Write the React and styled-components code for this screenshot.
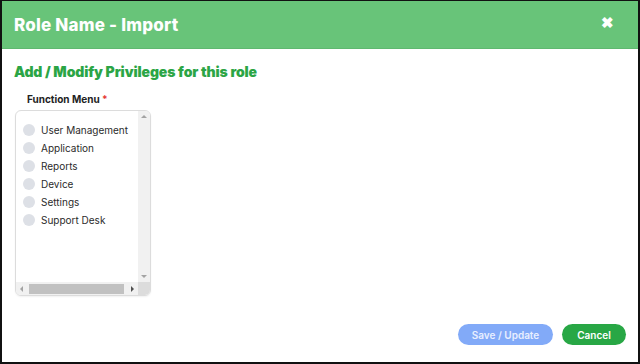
import React from 'react'
import styled, { createGlobalStyle } from 'styled-components'

const GlobalStyle = createGlobalStyle`
  html, body {
    margin: 0;
    padding: 0;
    background: #fff;
  }
  body {
    font-family: Inter, "Open Sans", sans-serif;
  }
`

const Frame = styled.div`
  width: 640px;
  height: 364px;
  box-sizing: border-box;
  border: 2px solid #111;
  border-top-width: 1px;
  display: flex;
  flex-direction: column;
  background: #fff;
`

const Header = styled.div`
  height: 47px;
  flex: none;
  background: #68c479;
  border-bottom: 1px solid #5fb870;
  display: flex;
  align-items: center;
  justify-content: space-between;
  padding: 0 24px 0 12px;
`

const Title = styled.h1`
  margin: 0;
  font-size: 17px;
  font-weight: 800;
  color: #fff;
  letter-spacing: 0.2px;
`

const Close = styled.span`
  color: #fff;
  font-size: 15px;
  font-weight: 900;
  line-height: 1;
  margin-top: -4px;
`

const Body = styled.div`
  flex: 1;
  display: flex;
  flex-direction: column;
  padding: 14px 12px 17px 12px;
`

const Heading = styled.h2`
  margin: 0;
  font-size: 14px;
  font-weight: 900;
  color: #2ba545;
  letter-spacing: -0.1px;
`

const Label = styled.div`
  margin: 13px 0 0 13px;
  font-size: 10px;
  font-weight: 700;
  color: #222;
  span {
    color: #e53935;
  }
`

const ListBox = styled.div`
  margin: 5px 0 0 1px;
  width: 136px;
  height: 186px;
  box-sizing: border-box;
  border: 1px solid #dcdcdc;
  border-radius: 6px;
  display: grid;
  grid-template-columns: 1fr 12px;
  grid-template-rows: 1fr 13px;
  overflow: hidden;
  box-shadow: 0 1px 2px rgba(0, 0, 0, 0.06);
`

const Items = styled.ul`
  list-style: none;
  margin: 0;
  padding: 12px 0 0 7px;
  display: flex;
  flex-direction: column;
  gap: 5px;
`

const Item = styled.li`
  display: flex;
  align-items: center;
  gap: 6px;
  height: 13px;
  font-size: 10px;
  color: #2b2b2b;
  white-space: nowrap;
`

const Radio = styled.span`
  width: 12px;
  height: 12px;
  border-radius: 50%;
  background: #dde0e6;
  flex: none;
`

const VTrack = styled.div`
  background: #f1f1f1;
  display: flex;
  flex-direction: column;
  justify-content: space-between;
  align-items: center;
  padding: 4px 0;
`

const HTrack = styled.div`
  background: #f1f1f1;
  display: flex;
  align-items: center;
  gap: 3px;
  padding: 0 4px;
`

const Corner = styled.div`
  background: #dcdcdc;
`

const Arrow = styled.span`
  width: 0;
  height: 0;
  border: 3px solid transparent;
  ${({ dir, dark }) => {
    const c = dark ? '#505050' : '#a3a3a3'
    if (dir === 'up') return `border-bottom-color: ${c}; border-top-width: 0;`
    if (dir === 'down') return `border-top-color: ${c}; border-bottom-width: 0;`
    if (dir === 'left') return `border-right-color: ${c}; border-left-width: 0;`
    return `border-left-color: ${c}; border-right-width: 0;`
  }}
`

const Thumb = styled.div`
  flex: 1;
  height: 10px;
  background: #c1c1c1;
  margin: 0 4px 0 3px;
`

const Footer = styled.div`
  margin-top: auto;
  display: flex;
  justify-content: flex-end;
  gap: 9px;
`

const Button = styled.button`
  height: 21px;
  border: none;
  border-radius: 11px;
  font-family: inherit;
  font-size: 10px;
  font-weight: 600;
  padding: 0;
  width: ${({ w }) => w}px;
  color: ${({ muted }) => (muted ? '#e9efff' : '#fff')};
  background: ${({ muted }) => (muted ? '#82aaf8' : '#28a745')};
`

const menu = ['User Management', 'Application', 'Reports', 'Device', 'Settings', 'Support Desk']

export default function App() {
  return (
    <>
      <GlobalStyle />
      <Frame>
        <Header>
          <Title>Role Name - Import</Title>
          <Close>✖</Close>
        </Header>
        <Body>
          <Heading>Add / Modify Privileges for this role</Heading>
          <Label>
            Function Menu <span>*</span>
          </Label>
          <ListBox>
            <Items>
              {menu.map((m) => (
                <Item key={m}>
                  <Radio />
                  {m}
                </Item>
              ))}
            </Items>
            <VTrack>
              <Arrow dir="up" />
              <Arrow dir="down" />
            </VTrack>
            <HTrack>
              <Arrow dir="left" />
              <Thumb />
              <Arrow dir="right" dark />
            </HTrack>
            <Corner />
          </ListBox>
          <Footer>
            <Button muted w={95}>Save / Update</Button>
            <Button w={64}>Cancel</Button>
          </Footer>
        </Body>
      </Frame>
    </>
  )
}
